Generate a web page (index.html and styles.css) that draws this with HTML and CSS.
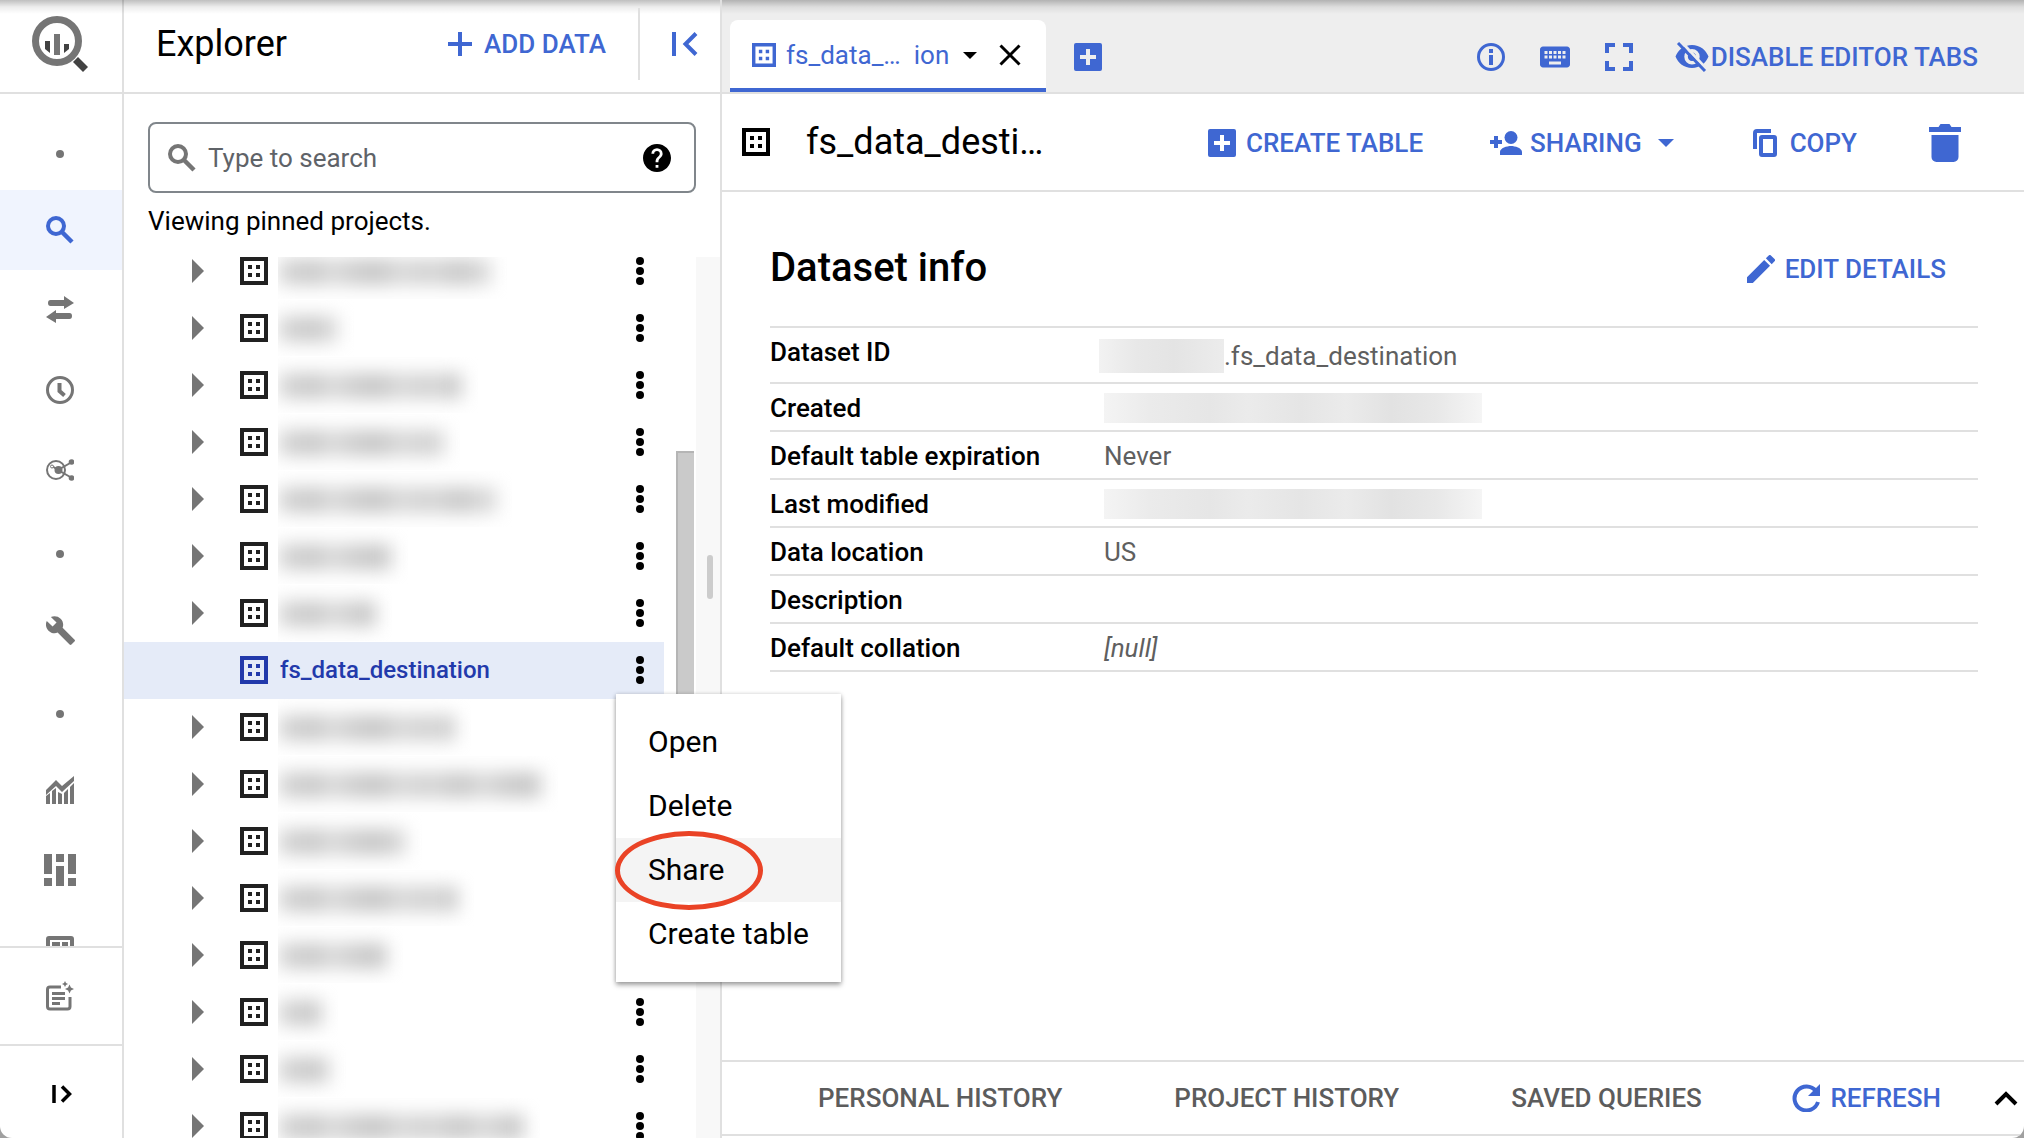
FILE: index.html
```html
<!DOCTYPE html>
<html lang="en">
<head>
    <meta charset="UTF-8">
    <meta name="viewport" content="width=device-width, initial-scale=1.0">
    <title>BigQuery Explorer</title>
    <link rel="stylesheet" href="styles.css">
</head>
<body>
    <!-- Shared icons -->
    <svg class="sprite" aria-hidden="true">
        <symbol id="i-dataset" viewBox="0 0 28 28"><path fill-rule="evenodd" d="M0 0h28v28H0zM4 4v20h20V4zM8 8h4v4H8zM16 8h4v4h-4zM8 16h4v4H8zM16 16h4v4h-4z"/></symbol>
        <symbol id="i-arrow" viewBox="0 0 12 24"><path d="M0 0l12 12L0 24z"/></symbol>
        <symbol id="i-more" viewBox="0 0 8 28"><circle cx="4" cy="4" r="4"/><circle cx="4" cy="14" r="4"/><circle cx="4" cy="24" r="4"/></symbol>
        <symbol id="i-search" viewBox="0 0 28 28"><circle cx="10" cy="10" r="8" fill="none" stroke="currentColor" stroke-width="4"/><path d="M15.500 15.500L26 26" fill="none" stroke="currentColor" stroke-width="4.500"/></symbol>
        <symbol id="i-caret" viewBox="0 0 16 8"><path d="M0 0h16L8 8z"/></symbol>
        <symbol id="i-addbox" viewBox="0 0 28 28"><path fill-rule="evenodd" d="M2 0h24a2 2 0 0 1 2 2v24a2 2 0 0 1-2 2H2a2 2 0 0 1-2-2V2a2 2 0 0 1 2-2zM12 6v6H6v4h6v6h4v-6h6v-4h-6V6z"/></symbol>
        <symbol id="i-dot" viewBox="0 0 8 8"><circle cx="4" cy="4" r="4"/></symbol>
    </svg>

    <div class="app">
        <nav class="rail" aria-label="Main">
            <div class="logo">
                <svg width="56" height="56" viewBox="0 0 56 56">
                    <path d="M41 46l5-5 10 10-5 5z" fill="#424242"/>
                    <circle cx="25" cy="25" r="21.500" fill="none" stroke="#757575" stroke-width="7"/>
                    <path d="M13 25h5v12l-5-4z" fill="#424242"/>
                    <path d="M22 18h6v21h-6z" fill="#757575"/>
                    <path d="M32 28h5v5l-5 4z" fill="#424242"/>
                </svg>
            </div>
            <div class="rail-list">
                <div class="rail-item rail-dot"><svg width="8" height="8"><use href="#i-dot"/></svg></div>
                <button class="rail-item active" aria-label="SQL workspace"><svg width="28" height="28"><use href="#i-search"/></svg></button>
                <button class="rail-item" aria-label="Data transfers">
                    <svg width="28" height="28" viewBox="0 0 28 28"><path d="M4.500 4H18V0l10 7-10 6V10H4.500a2.500 3 0 0 1 0-6zM23.500 17H10v-3L0 21l10 6v-4h13.500a2.500 3 0 0 0 0-6z"/></svg>
                </button>
                <button class="rail-item" aria-label="Scheduled queries">
                    <svg width="28" height="28" viewBox="0 0 28 28"><circle cx="14" cy="14" r="12.500" fill="none" stroke="currentColor" stroke-width="3"/><path d="M13.500 7v8l5 4.500" fill="none" stroke="currentColor" stroke-width="4"/></svg>
                </button>
                <button class="rail-item" aria-label="Analytics Hub">
                    <svg width="28" height="22" viewBox="0 0 28 22"><g fill="none" stroke="currentColor" stroke-width="2"><circle cx="10" cy="11" r="9"/><path d="M26 3L12 11l14 8M6 7l6 4"/></g><circle cx="12.500" cy="11" r="4"/><circle cx="25.500" cy="3" r="2.800"/><circle cx="25.500" cy="19" r="2.800"/><circle cx="6" cy="7.500" r="1.500" fill="#fff" stroke="currentColor"/></svg>
                </button>
                <div class="rail-item rail-dot"><svg width="8" height="8"><use href="#i-dot"/></svg></div>
                <button class="rail-item" aria-label="Migration">
                    <svg width="29" height="29" viewBox="1 1 22 22"><path d="M22.700 19l-9.100-9.100c.9-2.300.4-5-1.500-6.900-2-2-5-2.400-7.400-1.300L9 6 6 9 1.600 4.700C.4 7.100.9 10.100 2.900 12.100c1.900 1.900 4.600 2.400 6.900 1.500l9.100 9.100c.4.4 1 .4 1.400 0l2.300-2.300c.5-.4.5-1.100.1-1.400z"/></svg>
                </button>
                <div class="rail-item rail-dot"><svg width="8" height="8"><use href="#i-dot"/></svg></div>
                <button class="rail-item" aria-label="Monitoring">
                    <svg width="28" height="28" viewBox="0 0 28 28"><path d="M0 14L10 4l6 6L28 0v5L16 16l-6-6L0 19zM0 20l4-3v11H0zM6 15l4-3v16H6zM12 16l4 2v10h-4zM18 17l4-4v15h-4zM24 11l4-4v21h-4z"/></svg>
                </button>
                <button class="rail-item" aria-label="Capacity management">
                    <svg width="32" height="32" viewBox="0 0 32 32"><path d="M0 0h8v20H0zM0 24h8v8H0zM12 0h8v8h-8zM12 12h8v20h-8zM24 0h8v20h-8zM24 24h8v8h-8z"/></svg>
                </button>
                <button class="rail-item" aria-label="BI Engine">
                    <svg width="28" height="28" viewBox="0 0 28 28"><path fill-rule="evenodd" d="M3 0h22a3 3 0 0 1 3 3v22a3 3 0 0 1-3 3H3a3 3 0 0 1-3-3V3a3 3 0 0 1 3-3zM4 4v20h20V4zM6 6h8v7H6zM16 6h6v7h-6zM6 15h8v7H6zM16 15h6v7h-6z"/></svg>
                </button>
            </div>
            <button class="rail-notes" aria-label="Release notes">
                <svg width="28" height="30" viewBox="0 0 28 30"><path d="M15 6H4a2.500 2.500 0 0 0-2.500 2.500v17A2.500 2.500 0 0 0 4 28h17.500a2.500 2.500 0 0 0 2.500-2.500V16" fill="none" stroke="currentColor" stroke-width="3"/><path d="M6 11h13v3H6zM6 16h13v3H6zM6 21h8v3H6zM19 0l1 2 2 1-2 1-1 2-1-2-2-1 2-1zM23.500 3.500l1.400 3 3.100 1.500-3.100 1.500-1.400 3-1.400-3L19 8l3.100-1.500z"/></svg>
            </button>
            <button class="rail-expand" aria-label="Expand menu">
                <svg width="20" height="18" viewBox="0 0 20 18"><path d="M2 0v18M10 1.500L17.500 9 10 16.500" fill="none" stroke="currentColor" stroke-width="3.500"/></svg>
            </button>
        </nav>

        <aside class="explorer">
            <div class="explorer-header">
                <h2>Explorer</h2>
                <button class="btn add-data">
                    <svg width="24" height="24" viewBox="0 0 24 24"><path d="M10 0h4v10h10v4H14v10h-4V14H0v-4h10z"/></svg>
                    ADD DATA
                </button>
                <button class="btn collapse" aria-label="Collapse explorer">
                    <svg width="26" height="24" viewBox="0 0 26 24"><path d="M2 0v24M24 1.500L13.500 12 24 22.500" fill="none" stroke="currentColor" stroke-width="4"/></svg>
                </button>
            </div>

            <div class="search">
                <svg width="28" height="28"><use href="#i-search"/></svg>
                <input type="text" placeholder="Type to search" aria-label="Type to search">
                <button class="help" aria-label="Help">
                    <svg width="28" height="28" viewBox="2 2 20 20"><path d="M12 2C6.480 2 2 6.480 2 12s4.480 10 10 10 10-4.480 10-10S17.520 2 12 2zm1 17h-2v-2h2zm2.070-7.750l-.9.920C13.450 12.900 13 13.500 13 15h-2v-.5c0-1.100.45-2.100 1.170-2.830l1.240-1.260c.37-.36.59-.86.59-1.410a2 2 0 0 0-4 0H8a4 4 0 0 1 8 0c0 .88-.36 1.680-.93 2.250z"/></svg>
                </button>
            </div>
            <p class="pinned">Viewing pinned projects.</p>

            <div class="tree-wrap">
                <ul class="tree">
                    <li class="row"><svg class="arrow"><use href="#i-arrow"/></svg><svg class="dataset"><use href="#i-dataset"/></svg><span class="redacted" style="width: 229px"></span><button class="more" aria-label="Actions"><svg><use href="#i-more"/></svg></button></li>
                    <li class="row"><svg class="arrow"><use href="#i-arrow"/></svg><svg class="dataset"><use href="#i-dataset"/></svg><span class="redacted" style="width: 76px"></span><button class="more" aria-label="Actions"><svg><use href="#i-more"/></svg></button></li>
                    <li class="row"><svg class="arrow"><use href="#i-arrow"/></svg><svg class="dataset"><use href="#i-dataset"/></svg><span class="redacted" style="width: 200px"></span><button class="more" aria-label="Actions"><svg><use href="#i-more"/></svg></button></li>
                    <li class="row"><svg class="arrow"><use href="#i-arrow"/></svg><svg class="dataset"><use href="#i-dataset"/></svg><span class="redacted" style="width: 182px"></span><button class="more" aria-label="Actions"><svg><use href="#i-more"/></svg></button></li>
                    <li class="row"><svg class="arrow"><use href="#i-arrow"/></svg><svg class="dataset"><use href="#i-dataset"/></svg><span class="redacted" style="width: 234px"></span><button class="more" aria-label="Actions"><svg><use href="#i-more"/></svg></button></li>
                    <li class="row"><svg class="arrow"><use href="#i-arrow"/></svg><svg class="dataset"><use href="#i-dataset"/></svg><span class="redacted" style="width: 130px"></span><button class="more" aria-label="Actions"><svg><use href="#i-more"/></svg></button></li>
                    <li class="row"><svg class="arrow"><use href="#i-arrow"/></svg><svg class="dataset"><use href="#i-dataset"/></svg><span class="redacted" style="width: 114px"></span><button class="more" aria-label="Actions"><svg><use href="#i-more"/></svg></button></li>
                    <li class="row selected"><svg class="arrow"></svg><svg class="dataset"><use href="#i-dataset"/></svg><span class="name">fs_data_destination</span><button class="more" aria-label="Actions"><svg><use href="#i-more"/></svg></button></li>
                    <li class="row"><svg class="arrow"><use href="#i-arrow"/></svg><svg class="dataset"><use href="#i-dataset"/></svg><span class="redacted" style="width: 193px"></span><button class="more" aria-label="Actions"><svg><use href="#i-more"/></svg></button></li>
                    <li class="row"><svg class="arrow"><use href="#i-arrow"/></svg><svg class="dataset"><use href="#i-dataset"/></svg><span class="redacted" style="width: 280px"></span><button class="more" aria-label="Actions"><svg><use href="#i-more"/></svg></button></li>
                    <li class="row"><svg class="arrow"><use href="#i-arrow"/></svg><svg class="dataset"><use href="#i-dataset"/></svg><span class="redacted" style="width: 144px"></span><button class="more" aria-label="Actions"><svg><use href="#i-more"/></svg></button></li>
                    <li class="row"><svg class="arrow"><use href="#i-arrow"/></svg><svg class="dataset"><use href="#i-dataset"/></svg><span class="redacted" style="width: 196px"></span><button class="more" aria-label="Actions"><svg><use href="#i-more"/></svg></button></li>
                    <li class="row"><svg class="arrow"><use href="#i-arrow"/></svg><svg class="dataset"><use href="#i-dataset"/></svg><span class="redacted" style="width: 125px"></span><button class="more" aria-label="Actions"><svg><use href="#i-more"/></svg></button></li>
                    <li class="row"><svg class="arrow"><use href="#i-arrow"/></svg><svg class="dataset"><use href="#i-dataset"/></svg><span class="redacted" style="width: 60px"></span><button class="more" aria-label="Actions"><svg><use href="#i-more"/></svg></button></li>
                    <li class="row"><svg class="arrow"><use href="#i-arrow"/></svg><svg class="dataset"><use href="#i-dataset"/></svg><span class="redacted" style="width: 68px"></span><button class="more" aria-label="Actions"><svg><use href="#i-more"/></svg></button></li>
                    <li class="row"><svg class="arrow"><use href="#i-arrow"/></svg><svg class="dataset"><use href="#i-dataset"/></svg><span class="redacted" style="width: 262px"></span><button class="more" aria-label="Actions"><svg><use href="#i-more"/></svg></button></li>
                </ul>
                <div class="scrollbar"><div class="thumb"></div></div>
                <div class="resizer"><div class="handle"></div></div>
            </div>

            <div class="menu" role="menu">
                <button role="menuitem">Open</button>
                <button role="menuitem">Delete</button>
                <button role="menuitem" class="hover">Share<span class="ring"></span></button>
                <button role="menuitem">Create table</button>
            </div>
        </aside>

        <main class="main">
            <div class="tabbar">
                <div class="tab">
                    <svg width="24" height="24"><use href="#i-dataset"/></svg>
                    <span class="tab-name">fs_data_…</span>
                    <span>ion</span>
                    <button class="tab-caret" aria-label="Tab options"><svg width="14" height="7"><use href="#i-caret"/></svg></button>
                    <button class="tab-close" aria-label="Close tab"><svg width="22" height="22" viewBox="0 0 22 22"><path d="M1.500 1.500l19 19M20.500 1.500l-19 19" fill="none" stroke="currentColor" stroke-width="3"/></svg></button>
                </div>
                <button class="btn new-tab" aria-label="New tab"><svg width="28" height="28"><use href="#i-addbox"/></svg></button>
                <div class="tab-tools">
                    <button class="btn" aria-label="Info">
                        <svg width="28" height="28" viewBox="0 0 28 28"><circle cx="14" cy="14" r="12.500" fill="none" stroke="currentColor" stroke-width="3"/><path d="M12 6h4v4h-4zM12 12h4v10h-4z"/></svg>
                    </button>
                    <button class="btn" aria-label="Keyboard shortcuts">
                        <svg width="30" height="22" viewBox="2 5 20 14"><path d="M20 5H4c-1.100 0-2 .9-2 2v10c0 1.100.9 2 2 2h16c1.100 0 2-.9 2-2V7c0-1.100-.9-2-2-2zm-9 3h2v2h-2zm0 3h2v2h-2zM8 8h2v2H8zm0 3h2v2H8zm-1 2H5v-2h2zm0-3H5V8h2zm9 7H8v-2h8zm0-4h-2v-2h2zm0-3h-2V8h2zm3 3h-2v-2h2zm0-3h-2V8h2z"/></svg>
                    </button>
                    <button class="btn" aria-label="Full screen">
                        <svg width="28" height="28" viewBox="0 0 28 28"><path d="M0 0h10v4H4v6H0zM18 0h10v10h-4V4h-6zM0 18h4v6h6v4H0zM24 18h4v10H18v-4h6z"/></svg>
                    </button>
                    <button class="btn disable-tabs">
                        <svg width="34" height="30" viewBox="0 0 34 30"><path fill-rule="evenodd" d="M17 3c8 0 14 5 16.500 11.500C31 21 25 26 17 26S3 21 .5 14.500C3 8 9 3 17 3zm0 4a7.700 7.700 0 1 0 0 15.400A7.700 7.700 0 0 0 17 7zm0 3.500a4.200 4.200 0 1 1 0 8.400 4.200 4.200 0 0 1 0-8.400z"/><path d="M5.500-1l26 28" stroke="#eee" stroke-width="3"/><path d="M3 1l27 28" stroke="currentColor" stroke-width="3"/></svg>
                        DISABLE EDITOR TABS
                    </button>
                </div>
            </div>

            <div class="toolbar">
                <svg width="28" height="28" fill="#212121"><use href="#i-dataset"/></svg>
                <h1>fs_data_desti…</h1>
                <div class="actions">
                    <button class="btn"><svg width="28" height="28"><use href="#i-addbox"/></svg>CREATE TABLE</button>
                    <button class="btn sharing">
                        <svg width="32" height="24" viewBox="0 0 32 24"><circle cx="21" cy="6.500" r="6.500"/><path d="M10 24v-3c0-4 7-6 11-6s11 2 11 6v3zM4 5h4v4h4v4H8v4H4v-4H0V9h4z"/></svg>
                        SHARING
                        <svg class="share-caret" width="16" height="8"><use href="#i-caret"/></svg>
                    </button>
                    <button class="btn copy">
                        <svg width="24" height="28" viewBox="0 0 24 28"><path d="M2 20V4a2 2 0 0 1 2-2h14" fill="none" stroke="currentColor" stroke-width="4"/><rect x="8" y="8" width="14" height="18" rx="1" fill="none" stroke="currentColor" stroke-width="4"/></svg>
                        COPY
                    </button>
                    <button class="btn trash" aria-label="Delete dataset">
                        <svg width="32" height="38" viewBox="0 0 32 38"><path d="M0 3h9.500l2-3h9l2 3H32v5H0zM2.500 11h27v22a5 5 0 0 1-5 5h-17a5 5 0 0 1-5-5z"/></svg>
                    </button>
                </div>
            </div>

            <section class="content">
                <div class="content-head">
                    <h2>Dataset info</h2>
                    <button class="btn edit">
                        <svg width="28" height="28" viewBox="3 3 18 18"><path d="M3 17.250V21h3.750L17.810 9.940l-3.750-3.750zM20.710 7.040a1 1 0 0 0 0-1.410l-2.340-2.340a1 1 0 0 0-1.410 0l-1.830 1.830 3.750 3.750z"/></svg>
                        EDIT DETAILS
                    </button>
                </div>
                <table class="info">
                    <tr class="id-row"><th scope="row">Dataset ID</th><td><div class="id-value"><span class="redacted-id"></span>.fs_data_destination</div></td></tr>
                    <tr><th scope="row">Created</th><td><span class="redacted-date"></span></td></tr>
                    <tr><th scope="row">Default table expiration</th><td>Never</td></tr>
                    <tr><th scope="row">Last modified</th><td><span class="redacted-date"></span></td></tr>
                    <tr><th scope="row">Data location</th><td>US</td></tr>
                    <tr><th scope="row">Description</th><td></td></tr>
                    <tr><th scope="row">Default collation</th><td class="null">[null]</td></tr>
                </table>
            </section>

            <footer class="history">
                <div class="history-tabs">
                    <button>PERSONAL HISTORY</button>
                    <button>PROJECT HISTORY</button>
                    <button>SAVED QUERIES</button>
                </div>
                <div class="history-actions">
                    <button class="btn">
                        <svg width="28" height="28" viewBox="0 0 28 28"><path d="M24 7A12 12 0 1 0 26 18" fill="none" stroke="currentColor" stroke-width="4"/><path d="M28 0v12H16z"/></svg>
                        REFRESH
                    </button>
                    <button class="expand" aria-label="Expand history">
                        <svg width="24" height="16" viewBox="0 0 24 16"><path d="M2 14L12 4l10 10" fill="none" stroke="currentColor" stroke-width="4"/></svg>
                    </button>
                </div>
            </footer>
        </main>
    </div>
</body>
</html>
```

FILE: styles.css
```css
* {
    box-sizing: border-box;
}
html {
    background-color: #a0a0a0;
}
body {
    margin: 0;
    font-family: Roboto, Arial, sans-serif;
    font-size: 26px;
    line-height: 32px;
    color: #000;
}
h1, h2, p, ul {
    margin: 0;
    padding: 0;
}
button {
    font: inherit;
    color: inherit;
    background: none;
    border: 0;
    padding: 0;
    cursor: pointer;
    white-space: nowrap;
}
svg {
    fill: currentColor;
    flex: none;
    display: block;
}
.sprite {
    display: none;
}
.app {
    position: relative;
    display: grid;
    grid-template-columns: 124px 598px 1fr;
    height: 100vh;
    overflow: hidden;
    background-color: #fff;
    border-radius: 0 0 12px 12px;
}
/* shadow falling from the bar above */
.app::after {
    content: "";
    position: absolute;
    top: 0;
    left: 0;
    right: 0;
    height: 14px;
    background: linear-gradient(rgba(0,0,0,0.25), rgba(0,0,0,0.07) 50%, rgba(0,0,0,0));
    pointer-events: none;
}
.btn {
    display: flex;
    align-items: center;
    gap: 10px;
    color: #3f67d2;
    font-weight: 500;
}

/* left rail */
.rail {
    display: flex;
    flex-direction: column;
    min-height: 0;
    border-right: 2px solid #e0e0e0;
    color: #757575;
}
.logo {
    flex: none;
    height: 94px;
    padding: 16px 0 0 32px;
    border-bottom: 2px solid #e0e0e0;
}
.rail-list {
    flex: 1;
    min-height: 0;
    overflow: hidden;
    padding-top: 16px;
}
.rail-item {
    display: flex;
    align-items: center;
    justify-content: center;
    width: 100%;
    height: 80px;
    padding-right: 2px;
}
.rail-dot {
    padding-top: 8px;
}
.rail-item.active {
    background-color: #f0f4fe;
    color: #3f67d2;
}
.rail-notes, .rail-expand {
    flex: none;
    display: flex;
    align-items: center;
    justify-content: center;
    border-top: 2px solid #e0e0e0;
}
.rail-notes {
    height: 98px;
    padding-right: 2px;
}
.rail-expand {
    height: 94px;
    color: #000;
    padding: 4px 0 0 2px;
}

/* explorer */
.explorer {
    position: relative;
    z-index: 1;
    display: flex;
    flex-direction: column;
    min-height: 0;
    border-right: 2px solid #e0e0e0;
}
.explorer-header {
    flex: none;
    display: flex;
    align-items: center;
    height: 94px;
    padding: 0 22px 4px 32px;
    border-bottom: 2px solid #e0e0e0;
}
.explorer-header h2 {
    font-size: 36px;
    font-weight: 400;
}
.add-data {
    height: 72px;
    margin-left: auto;
    gap: 12px;
    padding-right: 32px;
    border-right: 2px solid #e0e0e0;
}
.collapse {
    padding-left: 32px;
}
.search {
    flex: none;
    display: flex;
    align-items: center;
    height: 71px;
    margin: 28px 24px 12px;
    padding: 0 23px 0 18px;
    border: 2px solid #80868b;
    border-radius: 8px;
    color: #757575;
}
.search input {
    flex: 1;
    min-width: 0;
    margin: 0 12px;
    padding: 0;
    border: 0;
    outline: 0;
    font: inherit;
    color: #000;
}
.search input::placeholder {
    color: #5f6368;
    opacity: 1;
}
.help {
    color: #000;
}
.pinned {
    padding-left: 24px;
}
.tree-wrap {
    flex: 1;
    display: flex;
    min-height: 0;
    margin-top: 20px;
}
.tree {
    flex: 1;
    list-style: none;
    overflow: hidden;
}
.row {
    display: flex;
    align-items: center;
    height: 57px;
    margin-right: 12px;
    padding: 0 20px 1px 68px;
}
.row:first-child {
    margin-top: -14px;
}
.row.selected {
    background-color: #e5ebf8;
}
.arrow {
    width: 12px;
    height: 24px;
    color: #757575;
}
.dataset {
    width: 28px;
    height: 28px;
    margin: 0 10px 0 36px;
    color: #212121;
}
.selected .dataset, .selected .name {
    color: #2239ab;
}
.name {
    padding-left: 2px;
    font-size: 24px;
    font-weight: 500;
}
.more {
    margin-left: auto;
}
.more svg {
    width: 8px;
    height: 28px;
}
.redacted {
    height: 56px;
    padding: 16px 16px 0 0;
    overflow: hidden;
}
.redacted::before {
    content: "";
    display: block;
    height: 26px;
    background: repeating-linear-gradient(90deg, #dadada 0, #cacaca 24px 40px, #dcdcdc 54px, #cdcdcd 74px, #c6c6c6 100px, #dadada 124px, #cecece 150px);
    filter: blur(9px);
}
.scrollbar {
    flex: none;
    width: 20px;
    padding-top: 194px;
}
.thumb {
    width: 18px;
    height: 320px;
    background-color: #cacaca;
    border: solid #b5b5b5;
    border-width: 2px 0 0 2px;
}
.resizer {
    flex: none;
    width: 24px;
    padding: 298px 0 0 11px;
    background-color: #f8f8f8;
}
.handle {
    width: 6px;
    height: 44px;
    border-radius: 3px;
    background-color: #ccc;
}

/* context menu */
.menu {
    position: absolute;
    top: 694px;
    left: 492px;
    width: 225px;
    padding: 16px 0;
    background-color: #fff;
    box-shadow: 0 3px 5px rgba(0,0,0,0.35), 0 0 4px rgba(0,0,0,0.15);
}
.menu button {
    position: relative;
    display: block;
    width: 100%;
    height: 64px;
    padding-left: 32px;
    font-size: 30px;
    text-align: left;
}
.menu .hover {
    background-color: #f4f4f4;
}
.ring {
    position: absolute;
    top: -7px;
    left: -1px;
    width: 148px;
    height: 79px;
    border: 5px solid #ea4326;
    border-radius: 50%;
}

/* main area */
.main {
    display: flex;
    flex-direction: column;
    min-width: 0;
    min-height: 0;
}
.tabbar {
    flex: none;
    display: flex;
    align-items: flex-end;
    height: 94px;
    padding: 0 46px 0 8px;
    background-color: #eee;
    border-bottom: 2px solid #e0e0e0;
}
.tab {
    display: flex;
    align-items: center;
    width: 316px;
    height: 72px;
    padding: 2px 25px 0 22px;
    background-color: #fff;
    border-bottom: 4px solid #3f67d2;
    border-radius: 8px 8px 0 0;
    color: #3f67d2;
}
.tab-name {
    margin: 0 13px 0 10px;
}
.tab-caret {
    margin-left: 14px;
    color: #000;
}
.tab-close {
    margin-left: auto;
    color: #000;
}
.new-tab {
    height: 72px;
    margin-left: 28px;
}
.tab-tools {
    display: flex;
    align-items: center;
    gap: 35px;
    height: 72px;
    margin-left: auto;
}
.disable-tabs {
    gap: 2px;
    margin-left: 7px;
}
.tab, .new-tab, .tab-tools {
    flex: none;
}
.new-tab, .tab-tools {
    padding-top: 1px;
}
.toolbar {
    flex: none;
    display: flex;
    align-items: center;
    height: 98px;
    padding: 0 58px 0 20px;
    border-bottom: 2px solid #e0e0e0;
}
.toolbar h1 {
    margin-left: 36px;
    font-size: 36px;
    font-weight: 400;
}
.actions {
    display: flex;
    align-items: center;
    gap: 67px;
    margin-left: auto;
    padding-top: 2px;
}
.sharing {
    gap: 8px;
}
.share-caret {
    margin: 0 12px 0 8px;
}
.copy {
    gap: 13px;
}
.trash {
    width: 42px;
    justify-content: center;
}
.content {
    flex: 1;
    min-height: 0;
    padding: 48px 46px 0 48px;
}
.content-head {
    display: flex;
    align-items: center;
    justify-content: space-between;
    height: 56px;
    margin-bottom: 30px;
    padding-right: 32px;
}
.content-head h2 {
    font-size: 40px;
    font-weight: 500;
}
.edit {
    padding-top: 2px;
}
.info {
    width: 100%;
    border-spacing: 0;
    border-top: 2px solid #e0e0e0;
}
.info th, .info td {
    height: 48px;
    padding: 2px 0 0;
    border-bottom: 2px solid #e0e0e0;
    text-align: left;
}
.info th {
    width: 334px;
    font-weight: 500;
}
.info td {
    color: #5f5f5f;
}
.info .id-row th {
    height: 56px;
    padding-bottom: 8px;
}
.info .null {
    font-style: italic;
}
.id-value {
    display: flex;
    align-items: center;
}
.redacted-id, .redacted-date {
    display: block;
    background: linear-gradient(90deg, #f4f4f4, #ebebeb 12%, #e6e6e6 28%, #ebebeb 38%, #e5e5e5 52%, #ebebeb 64%, #e2e2e2 76%, #e8e8e8 88%, #f5f5f5);
}
.redacted-id {
    width: 125px;
    height: 34px;
    margin-left: -5px;
    background: linear-gradient(90deg, #f2f2f2, #e8e8e8 30%, #e4e4e4 60%, #ececec);
}
.redacted-date {
    width: 378px;
    height: 30px;
}
.history {
    flex: none;
    display: flex;
    align-items: center;
    justify-content: space-between;
    height: 76px;
    margin-bottom: 2px;
    padding: 0 6px 0 96px;
    border-top: 2px solid #e0e0e0;
    border-bottom: 2px solid #e0e0e0;
    color: #5c5c5c;
    font-weight: 500;
}
.history-tabs {
    display: flex;
    gap: 112px;
}
.history-actions {
    display: flex;
    align-items: center;
    gap: 53px;
}
.expand {
    color: #000;
}
```
